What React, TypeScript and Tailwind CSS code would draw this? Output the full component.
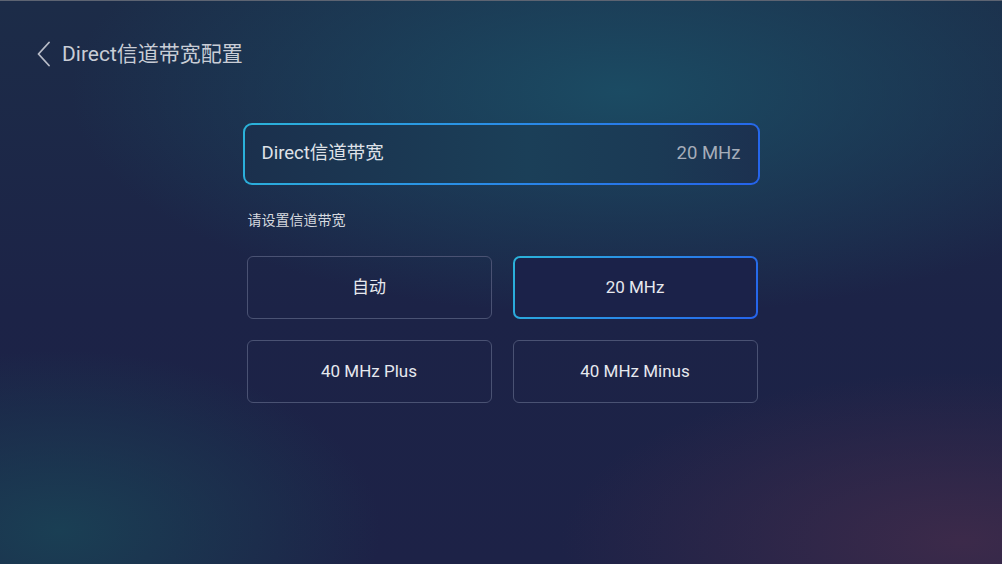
const font = "font-['Roboto','Noto_Sans_CJK_SC',sans-serif]";

const options = [
  { label: "自动", selected: false },
  { label: "20 MHz", selected: true },
  { label: "40 MHz Plus", selected: false },
  { label: "40 MHz Minus", selected: false },
];

export default function App() {
  return (
    <div
      className={`${font} w-[1002px] h-[564px] overflow-hidden border-t border-[#5d6472] flex flex-col bg-[radial-gradient(ellipse_55%_40%_at_62%_16%,#1b4b63_0%,rgba(27,75,99,0)_100%),radial-gradient(ellipse_32%_32%_at_6%_94%,#1a3f54_0%,rgba(26,63,84,0)_100%),radial-gradient(ellipse_40%_30%_at_96%_96%,#3c2a4a_0%,rgba(60,42,74,0)_100%),linear-gradient(180deg,#1c2c48_0%,#1c2347_55%,#1d2247_100%)]`}
    >
      {/* header */}
      <div className="flex items-center h-[28px] mt-[39px] pl-[37px] gap-[12px]">
        <svg width="13" height="26" viewBox="0 0 13 26" fill="none">
          <polyline
            points="12,1.5 1.5,13 12,24.5"
            stroke="#b9bdc8"
            strokeWidth="1.8"
            strokeLinecap="round"
            strokeLinejoin="round"
          />
        </svg>
        <span className="text-[21px] leading-none text-[#c9cdd6]">Direct信道带宽配置</span>
      </div>

      {/* content */}
      <div className="mt-[55px] mx-auto w-[517px] flex flex-col">
        <div className="h-[62px] rounded-[9px] border-2 border-transparent flex items-center justify-between px-[17px] [background:linear-gradient(90deg,#1b304d,#1b3f58_55%,#1b3a55_80%,#1c3150)_padding-box,linear-gradient(120deg,#2bb3d9_0%,#2a8fe6_45%,#2563eb_100%)_border-box]">
          <span className="text-[18.5px] text-[#dfe2e8]">Direct信道带宽</span>
          <span className="text-[18.5px] text-[#a6adb9]">20 MHz</span>
        </div>

        <div className="mt-[25px] pl-[5px] text-[14px] leading-[20px] text-[#d6d9df]">请设置信道带宽</div>

        <div className="mt-[26px] pl-[4px] pr-[2px] grid grid-cols-2 gap-x-[21px] gap-y-[21px]">
          {options.map((o) => (
            <div
              key={o.label}
              className={
                o.selected
                  ? "h-[63px] rounded-[7px] border-2 border-transparent flex items-center justify-center text-[17px] text-[#e6e8ee] [background:linear-gradient(#1b2249,#1b2249)_padding-box,linear-gradient(120deg,#2bb3d9_0%,#2a8fe6_45%,#2563eb_100%)_border-box]"
                  : "h-[63px] rounded-[6px] border border-[#4a5273] flex items-center justify-center text-[17px] text-[#e6e8ee]"
              }
            >
              {o.label}
            </div>
          ))}
        </div>
      </div>
    </div>
  );
}
